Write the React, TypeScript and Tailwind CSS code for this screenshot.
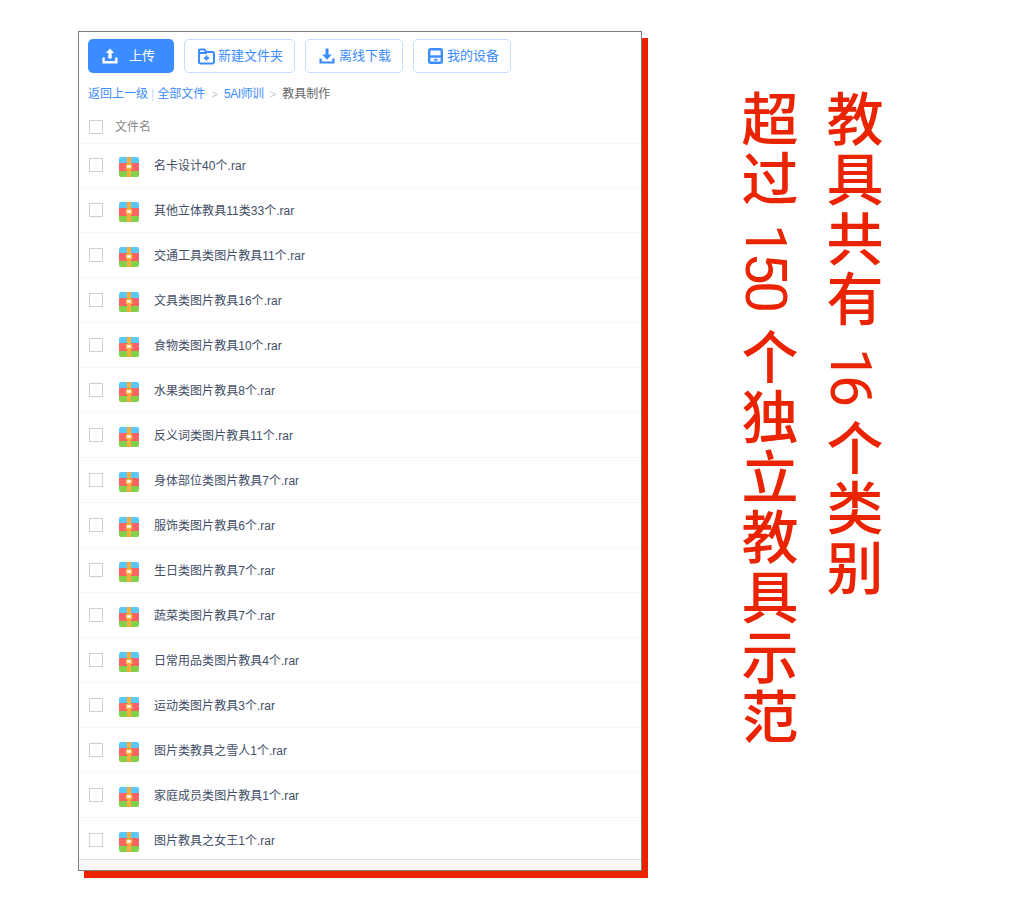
const files = [
  "名卡设计40个.rar",
  "其他立体教具11类33个.rar",
  "交通工具类图片教具11个.rar",
  "文具类图片教具16个.rar",
  "食物类图片教具10个.rar",
  "水果类图片教具8个.rar",
  "反义词类图片教具11个.rar",
  "身体部位类图片教具7个.rar",
  "服饰类图片教具6个.rar",
  "生日类图片教具7个.rar",
  "蔬菜类图片教具7个.rar",
  "日常用品类图片教具4个.rar",
  "运动类图片教具3个.rar",
  "图片类教具之雪人1个.rar",
  "家庭成员类图片教具1个.rar",
  "图片教具之女王1个.rar",
];

const RarIcon = () => (
  <svg width="20" height="20" viewBox="0 0 20 20" className="block shrink-0">
    <path d="M2 0h16a2 2 0 0 1 2 2v4H0V2a2 2 0 0 1 2-2z" fill="#5ac8fa" />
    <rect x="0" y="6" width="20" height="8" fill="#fc6464" />
    <path d="M0 14h20v4a2 2 0 0 1-2 2H2a2 2 0 0 1-2-2z" fill="#84d04a" />
    <rect x="8" y="0" width="4" height="20" fill="#fbae3c" />
    <rect x="6.700" y="7" width="6.600" height="5" fill="#fbae3c" />
    <rect x="8" y="8.300" width="4" height="2.400" fill="#ffffff" />
  </svg>
);

const UploadIcon = () => (
  <svg width="16" height="16" viewBox="0 0 16 16" fill="#ffffff">
    <path d="M8 0.500l4.200 4.500H9.700V10.500H6.300V5H3.800z" />
    <path d="M0.500 9.500H2.800V13h10.400V9.500h2.300V15.500H0.500z" />
  </svg>
);

const FolderIcon = () => (
  <svg width="17" height="17" viewBox="0 0 17 17" fill="none">
    <path
      d="M1 14V2.500A1 1 0 0 1 2 1.500h4.500L8 4h6.500a1.500 1.500 0 0 1 1.500 1.500v8.500a1.500 1.500 0 0 1-1.500 1.500h-12A1.500 1.500 0 0 1 1 14z"
      stroke="#3b8cff"
      strokeWidth="2"
    />
    <path d="M1 5h8" stroke="#3b8cff" strokeWidth="2" />
    <path d="M8.500 7.500v5M6 10h5" stroke="#3b8cff" strokeWidth="2" />
  </svg>
);

const DownloadIcon = () => (
  <svg width="16" height="16" viewBox="0 0 16 16" fill="#3b8cff">
    <path d="M6.500 0.500h3V6.500h3.300L8 11.800 3.200 6.500h3.300z" />
    <path d="M0.500 10.500H2.700V13.500h10.600V10.500h2.200V15.500H0.500z" />
  </svg>
);

const DeviceIcon = () => (
  <svg width="15" height="16" viewBox="0 0 15 16" fill="none">
    <rect x="1.200" y="1.200" width="12.600" height="13.600" rx="1.500" stroke="#3b8cff" strokeWidth="2.400" />
    <path d="M1 8.500h13" stroke="#3b8cff" strokeWidth="2.400" />
    <rect x="6" y="10.800" width="3.500" height="1.800" fill="#3b8cff" />
  </svg>
);

const Checkbox = () => (
  <span className="block w-[14px] h-[14px] border border-[#cfcfcf] bg-white shrink-0" />
);

const ToolButton = ({ icon, label, className }: { icon: React.ReactNode; label: string; className: string }) => (
  <button className={`h-[34px] flex items-center rounded-[5px] border border-[#c3dcff] bg-white text-[13px] text-[#3b8cff] ${className}`}>
    {icon}
    <span>{label}</span>
  </button>
);

export default function App() {
  return (
    <div
      className="w-[1027px] h-[900px] bg-white flex items-start pl-[78px] pt-[31px] overflow-hidden"
      style={{ fontFamily: '"Liberation Sans", "Noto Sans CJK SC", sans-serif' }}
    >
      <div className="w-[564px] h-[840px] border border-[#808080] bg-white shadow-[6px_7px_0_#ea2300] flex flex-col shrink-0">
        <div className="flex items-center gap-[10px] pl-[9px] pt-[7px]">
          <button className="h-[34px] w-[86px] flex items-center pl-[14px] gap-[11px] rounded-[5px] bg-[#3b8cff] text-[13px] text-white">
            <UploadIcon />
            <span>上传</span>
          </button>
          <ToolButton icon={<FolderIcon />} label="新建文件夹" className="w-[111px] pl-[13px] gap-[3px]" />
          <ToolButton icon={<DownloadIcon />} label="离线下载" className="w-[98px] pl-[13px] gap-[4px]" />
          <ToolButton icon={<DeviceIcon />} label="我的设备" className="w-[98px] pl-[14px] gap-[4px]" />
        </div>

        <div className="flex items-center h-[14px] mt-[14px] pl-[9px] text-[12px] text-[#3b8cff] whitespace-nowrap">
          <span>返回上一级</span>
          <span className="mx-[3px] text-[#c3dcff]">|</span>
          <span>全部文件</span>
          <span className="mx-[6.500px] text-[#c0c4cc] text-[10px]">&gt;</span>
          <span className="tracking-[-0.500px]">5AI师训</span>
          <span className="mx-[6.500px] text-[#c0c4cc] text-[10px]">&gt;</span>
          <span className="text-[#666666]">教具制作</span>
        </div>

        <div className="flex items-center h-[34px] mt-[9px] pl-[10px] border-b border-[#f4f6fa] text-[12px] text-[#888888]">
          <Checkbox />
          <span className="ml-[12px]">文件名</span>
        </div>

        <div className="flex-1 min-h-0 overflow-hidden">
          {files.map((name) => (
            <div key={name} className="flex items-center h-[45px] first:h-[44px] first:pb-[1px] pl-[10px] border-b border-[#f4f6fa]">
              <Checkbox />
              <span className="ml-[16px] mt-[4px]">
                <RarIcon />
              </span>
              <span className="ml-[15px] mt-[2px] text-[12px] tracking-[0.030px] text-[#424e67]">{name}</span>
            </div>
          ))}
        </div>

        <div className="h-[11px] shrink-0 bg-[#f9f9f9] border-t border-[#dcdcdc]" />
      </div>

      <div className="flex flex-row-reverse items-start ml-[93px] mt-[59px] gap-[25px] text-[57px] leading-[60px] font-medium tracking-[3px] text-[#ea2300] whitespace-nowrap">
        <div className="[writing-mode:vertical-rl]">
          教具共有 <span className="font-['Roboto'] font-normal tracking-[-5px] ms-[-1px] me-[-2px]">16</span> 个类别
        </div>
        <div className="[writing-mode:vertical-rl]">
          超过 <span className="font-['Roboto'] font-normal tracking-[-3.500px] ms-[-5px]">150</span> 个独立教具示范
        </div>
      </div>
    </div>
  );
}
